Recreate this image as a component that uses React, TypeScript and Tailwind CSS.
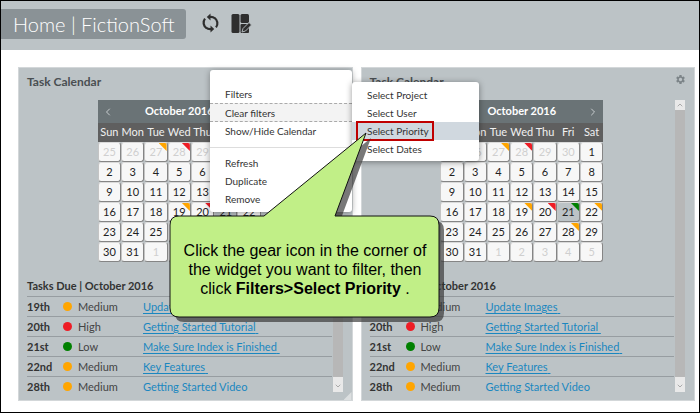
import React from "react";
import { ChevronDown, ChevronLeft, ChevronRight, ChevronUp } from "lucide-react";
import { MdSettings } from "react-icons/md";

type Flag = "orange" | "red" | "green";

const flagColor: Record<Flag, string> = {
  orange: "bg-[#ffa500]",
  red: "bg-[#ee1c25]",
  green: "bg-[#008000]",
};

const dayNames = ["Sun", "Mon", "Tue", "Wed", "Thu", "Fri", "Sat"];

const weeks = [
  [25, 26, 27, 28, 29, 30, 1],
  [2, 3, 4, 5, 6, 7, 8],
  [9, 10, 11, 12, 13, 14, 15],
  [16, 17, 18, 19, 20, 21, 22],
  [23, 24, 25, 26, 27, 28, 29],
  [30, 31, 1, 2, 3, 4, 5],
];

const flags: Record<string, Flag> = {
  "0-2": "orange",
  "0-3": "red",
  "3-3": "orange",
  "3-4": "red",
  "3-5": "green",
  "3-6": "orange",
  "4-5": "orange",
};

const tasks: { day: string; level: string; flag: Flag; title: string; last?: boolean }[] = [
  { day: "19th", level: "Medium", flag: "orange", title: "Update Images" },
  { day: "20th", level: "High", flag: "red", title: "Getting Started Tutorial" },
  { day: "21st", level: "Low", flag: "green", title: "Make Sure Index is Finished" },
  { day: "22nd", level: "Medium", flag: "orange", title: "Key Features" },
  { day: "28th", level: "Medium", flag: "orange", title: "Getting Started Video", last: true },
];

function Calendar() {
  return (
    <div className="mx-auto w-[163px]">
      <div className="flex h-[23px] items-center justify-between bg-[#6a7376] px-1 text-white">
        <button aria-label="Previous month" className="text-[#c8cdcf]">
          <ChevronLeft size={12} />
        </button>
        <span className="text-[11px] font-bold">October 2016</span>
        <button aria-label="Next month" className="text-[#c8cdcf]">
          <ChevronRight size={12} />
        </button>
      </div>
      <table className="w-full table-fixed border-collapse bg-[#5f5f5f] text-center text-[11px]">
        <thead>
          <tr className="h-[19px] text-[#f0f0f0]">
            {dayNames.map((name) => (
              <th key={name} className="p-0 font-normal">
                {name}
              </th>
            ))}
          </tr>
        </thead>
        <tbody className="bg-[#bcc3c6]">
          {weeks.map((week, w) => (
            <tr key={w}>
              {week.map((day, d) => {
                const flag = flags[`${w}-${d}`];
                const outside = (w === 0 && day > 7) || (w === 5 && day < 7);
                const today = w === 3 && d === 5;
                return (
                  <td key={d} className="p-0">
                    <div
                      className={`relative flex h-5 items-center justify-center overflow-hidden rounded-[3px] border border-t-[#dadada] border-r-[#858585] border-b-[#858585] border-l-[#c4c4c4] ${
                        today ? "bg-[#bcc3c6]" : "bg-[#f7f7f7]"
                      } ${outside ? "text-[#cfcfcf]" : "text-[#222222]"}`}
                    >
                      {day}
                      {flag && (
                        <span
                          className={`absolute top-0 right-0 size-2 [clip-path:polygon(0_0,100%_0,100%_100%)] ${flagColor[flag]}`}
                        />
                      )}
                    </div>
                  </td>
                );
              })}
            </tr>
          ))}
        </tbody>
      </table>
    </div>
  );
}

function TaskList() {
  return (
    <section className="pt-4">
      <h3 className="pb-[2px] text-[11px] leading-4 font-bold text-[#333333]">Tasks Due | October 2016</h3>
      <table className="w-full table-fixed border-collapse text-left text-[11px] leading-4 text-[#444444]">
        <tbody>
          {tasks.map((task) => (
            <tr key={task.day} className="h-5 border-t border-[#979da1]">
              <th className="w-9 p-0 font-bold text-[#333333]">{task.day}</th>
              <td className="w-20 p-0">
                <span className="flex items-center gap-[6px]">
                  <span className={`size-[9px] rounded-full ${flagColor[task.flag]}`} />
                  {task.level}
                </span>
              </td>
              <td className="p-0">
                <a
                  href="#"
                  className={`whitespace-pre text-[#1a87c0] underline-offset-2 ${task.last ? "" : "underline"}`}
                >
                  {task.title}{" "}
                </a>
              </td>
            </tr>
          ))}
        </tbody>
      </table>
    </section>
  );
}

function ScrollBar() {
  return (
    <div className="flex w-[10px] shrink-0 flex-col justify-between bg-[#b7b7b7] text-[#888888]">
      <button aria-label="Scroll up" className="flex h-[10px] items-center justify-center bg-[#e9e9e9]">
        <ChevronUp size={8} />
      </button>
      <button aria-label="Scroll down" className="flex h-[15px] items-end justify-center bg-[#e9e9e9] pb-[2px]">
        <ChevronDown size={8} />
      </button>
    </div>
  );
}

function Widget({ gear = false }: { gear?: boolean }) {
  return (
    <article className="relative flex-1 border border-[#d3d7d9] bg-[#bcc3c6] pl-2">
      <header className="flex h-8 items-start justify-between pt-[6px] pr-2">
        <h2 className="text-[12px] leading-4 font-bold text-[#4a4f52]">Task Calendar</h2>
        {gear && (
          <button aria-label="Widget settings" className="text-[#7c8488]">
            <MdSettings size={11} />
          </button>
        )}
      </header>
      <div className="flex h-[292px] pr-[9px]">
        <div className="min-w-0 flex-1 pr-px">
          <Calendar />
          <TaskList />
        </div>
        <ScrollBar />
      </div>
      <div className="h-2" />
      {!gear && (
        <span className="absolute right-0 bottom-0 size-2 bg-[#dcdfe0] [clip-path:polygon(100%_0,100%_100%,0_100%)]" />
      )}
    </article>
  );
}

function WidgetMenu() {
  const item = "block h-[18px] w-full px-[15px] text-left";
  return (
    <div className="absolute top-[69px] left-[209px] w-[142px] rounded-[3px] bg-white pt-[15px] pb-1 text-[10px] leading-[18px] text-[#333333] shadow-[0_1px_6px_rgba(0,0,0,0.35)]">
      <button className={item}>Filters</button>
      <button className="block h-[19px] w-full border-y border-dashed border-[#aaaaaa] bg-[#f3f3f3] px-[15px] text-left">
        Clear filters
      </button>
      <button className={item}>Show/Hide Calendar</button>
      <hr className="mt-[7px] mb-[6px] border-[#dddddd]" />
      <button className={item}>Refresh</button>
      <button className={item}>Duplicate</button>
      <button className={item}>Remove</button>
    </div>
  );
}

function FilterMenu() {
  const item = "block h-[18px] w-full px-[15px] text-left";
  return (
    <div className="absolute top-[81px] left-[351px] w-[127px] rounded-[3px] bg-white pt-1 pb-[3px] text-[10px] leading-[18px] text-[#333333] shadow-[0_1px_6px_rgba(0,0,0,0.4)]">
      <button className={item}>Select Project</button>
      <button className={item}>Select User</button>
      <button className={`${item} relative bg-[#d0d8df]`}>
        Select Priority
        <span className="absolute -top-px left-1 h-5 w-[78px] border-2 border-[#c00000]" />
      </button>
      <button className={item}>Select Dates</button>
    </div>
  );
}

const calloutPath =
  "M179 216 H264 L366 133 L335 216 H430 Q439 216 439 225 V308 Q439 317 430 317 H179 Q170 317 170 308 V225 Q170 216 179 216 Z";

function Callout() {
  return (
    <>
      <svg className="pointer-events-none absolute -top-px -left-px" width="460" height="340" viewBox="0 0 460 340">
        <path d={calloutPath} transform="translate(5 5)" fill="#303030" fillOpacity="0.65" />
        <path d={calloutPath} fill="#c1ef87" stroke="#111111" />
      </svg>
      <p className="absolute top-[240px] left-[169px] w-[270px] text-center font-['Liberation_Sans',Arial,sans-serif] text-[16px] leading-[19px] text-black">
        Click the gear icon in the corner of
        <br />
        the widget you want to filter, then
        <br />
        click <b>Filters&gt;Select Priority</b> .
      </p>
    </>
  );
}

export default function App() {
  return (
    <div className="relative min-h-screen border border-black bg-white font-[Lato,'Noto_Sans',sans-serif]">
      <header className="flex h-[49px] items-start bg-[#bcc3c6] pt-2">
        <h1 className="h-[30px] w-[185px] rounded-r-[3px] bg-[#8a9296] pl-3 text-[20px] leading-[30px] font-light whitespace-nowrap text-white">
          Home | FictionSoft
        </h1>
        <button aria-label="Refresh" className="mt-1 ml-4 text-[#2e2e2e]">
          <svg width="17" height="20" viewBox="0 0 17 20" fill="none" stroke="currentColor" strokeWidth="2.2">
            <path d="M4.6 15.2A6.6 6.6 0 0 1 3 5.6" />
            <path d="M12.4 4.8A6.6 6.6 0 0 1 14 14.4" />
            <path d="M7.5 3.9Q10.8 3.4 12.8 5.2M9.5 16.1Q6.2 16.6 4.2 14.8" />
            <path d="M8.5 0.5V7.5L4.8 4zM8.5 12.5V19.5L12.2 16z" fill="currentColor" stroke="none" />
          </svg>
        </button>
        <button aria-label="Edit layout" className="mt-1 ml-3 text-[#2e2e2e]">
          <svg width="21" height="21" viewBox="0 0 21 21" fill="currentColor">
            <rect x="0.5" y="1" width="8" height="19" rx="1.5" />
            <rect x="9.5" y="1" width="8.5" height="9" rx="1.5" />
            <path d="M10.5 11H18V19Q18 20 17 20H10.5Q9.5 20 9.5 19V12Q9.5 11 10.5 11Z" />
            <path d="M11 19L12 15.5L18 9.5L20.5 12L14.5 18Z" stroke="#bcc3c6" strokeWidth="0.9" />
          </svg>
        </button>
      </header>
      <main className="flex gap-2 pt-[17px] pr-1 pb-2 pl-[17px]">
        <Widget />
        <Widget gear />
      </main>
      <WidgetMenu />
      <FilterMenu />
      <Callout />
    </div>
  );
}
